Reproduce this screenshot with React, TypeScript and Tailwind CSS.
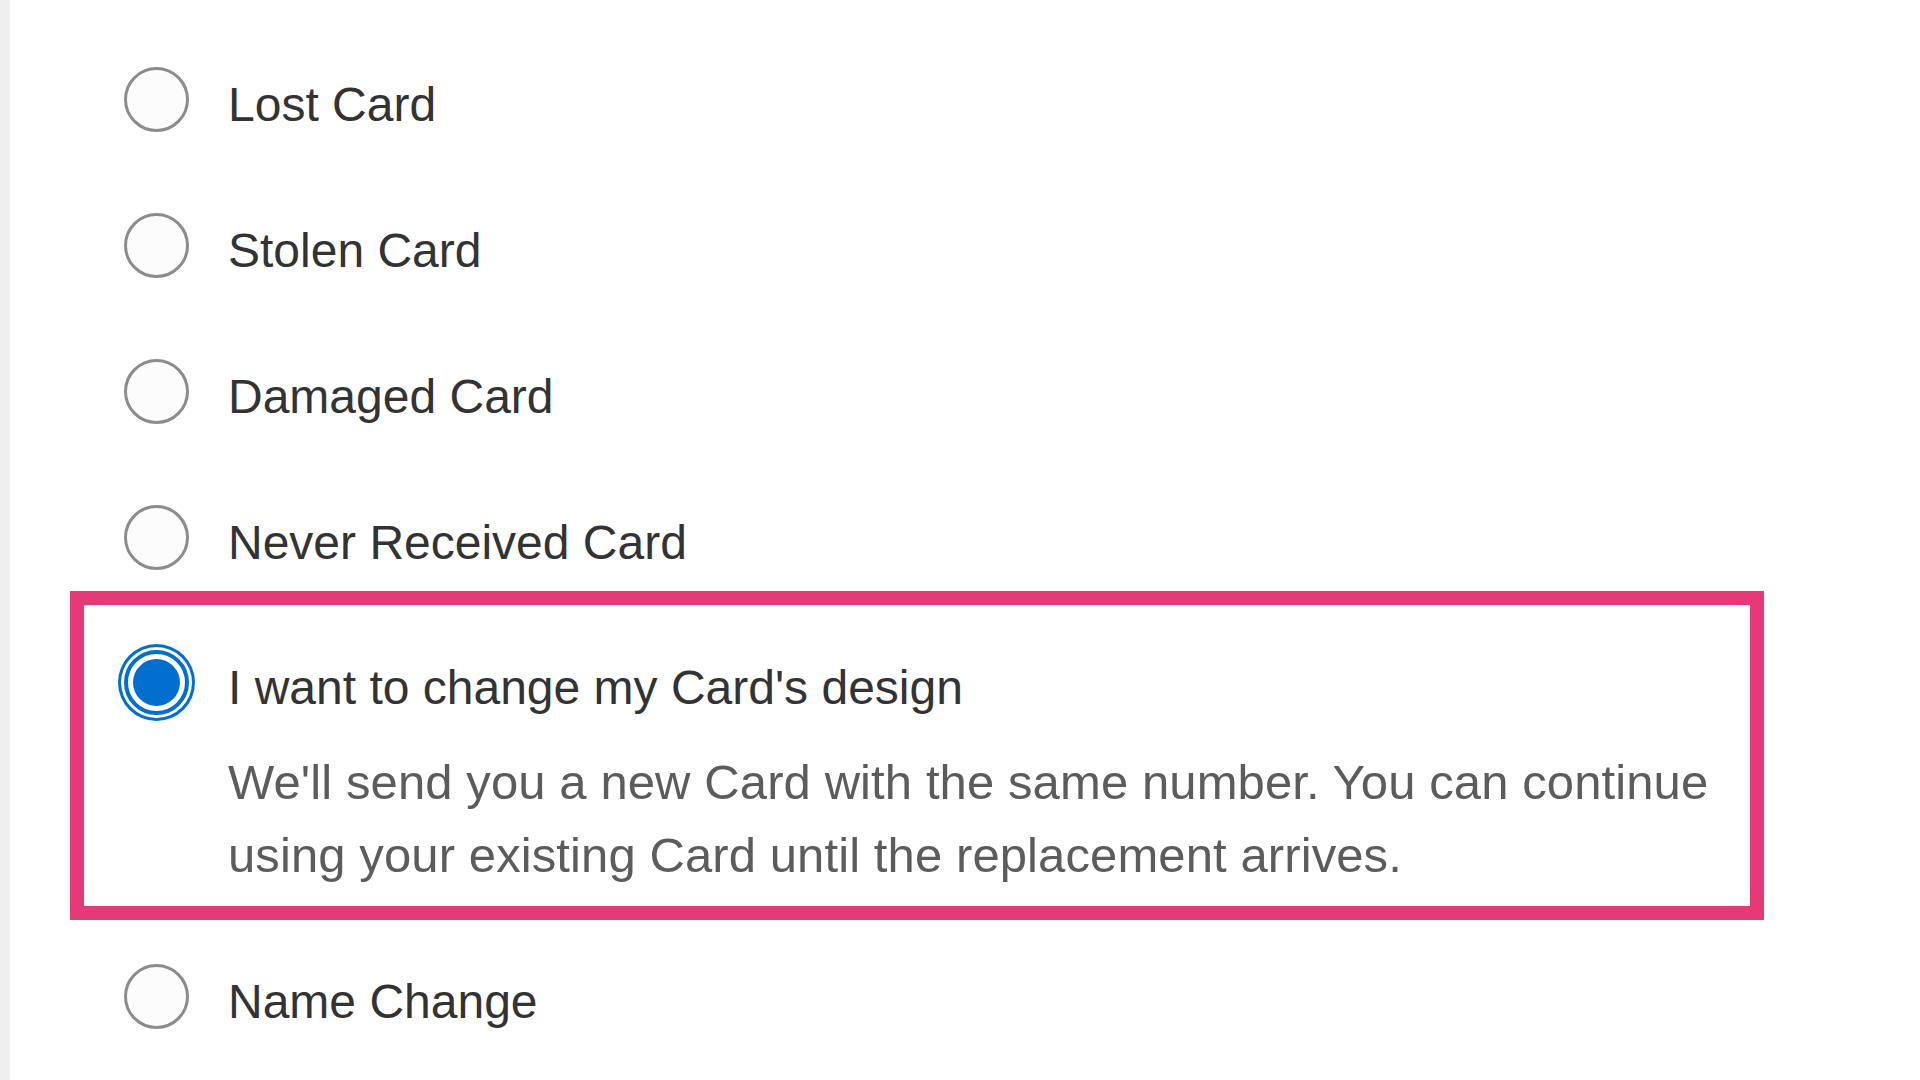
import { useState } from "react"

const options = [
  { id: "lost", label: "Lost Card" },
  { id: "stolen", label: "Stolen Card" },
  { id: "damaged", label: "Damaged Card" },
  { id: "never", label: "Never Received Card" },
  {
    id: "design",
    label: "I want to change my Card's design",
    detail:
      "We'll send you a new Card with the same number. You can continue using your existing Card until the replacement arrives.",
  },
  { id: "name", label: "Name Change" },
]

function Radio({ checked }: { checked: boolean }) {
  if (checked) {
    return (
      <span className="flex h-[65px] w-[65px] shrink-0 items-center justify-center rounded-full border-[4px] border-[#016fd0] bg-white ring-[3px] ring-[#016fd0] ring-offset-[3px] ring-offset-white">
        <span className="h-[47px] w-[47px] rounded-full bg-[#016fd0]" />
      </span>
    )
  }
  return <span className="h-[65px] w-[65px] shrink-0 rounded-full border-[3px] border-[#8c8c8c] bg-[#fcfcfc]" />
}

export default function App() {
  const [selected, setSelected] = useState("design")

  return (
    <div className="flex min-h-screen bg-white font-['Liberation_Sans',Arial,sans-serif]">
      <div className="w-[10px] shrink-0 bg-[#efefef]" />
      <div className="flex flex-1 flex-col pt-[67px]">
        {options.map((opt, i) => {
          const isOn = selected === opt.id
          const label = (
            <div className="flex items-start gap-[39px]">
              <Radio checked={isOn} />
              <div className="flex flex-col">
                <span className="pt-[5px] text-[48px] leading-[65px] text-[#333333]">{opt.label}</span>
                {isOn && opt.detail && (
                  <p className="mt-[26px] pr-[20px] text-[49px] leading-[73px] tracking-[0.1px] text-[#5c5c5c]">
                    {opt.detail}
                  </p>
                )}
              </div>
            </div>
          )

          if (isOn) {
            return (
              <button
                key={opt.id}
                onClick={() => setSelected(opt.id)}
                className="mt-[16px] mb-[44px] ml-[60px] w-[1694px] border-[14px] border-[#e63a78] pt-[45px] pb-[14px] pl-[40px] text-left"
              >
                {label}
              </button>
            )
          }

          return (
            <button
              key={opt.id}
              onClick={() => setSelected(opt.id)}
              className={`pl-[114px] text-left ${i < 3 ? "mb-[76px]" : ""}`}
            >
              {label}
            </button>
          )
        })}
      </div>
    </div>
  )
}
